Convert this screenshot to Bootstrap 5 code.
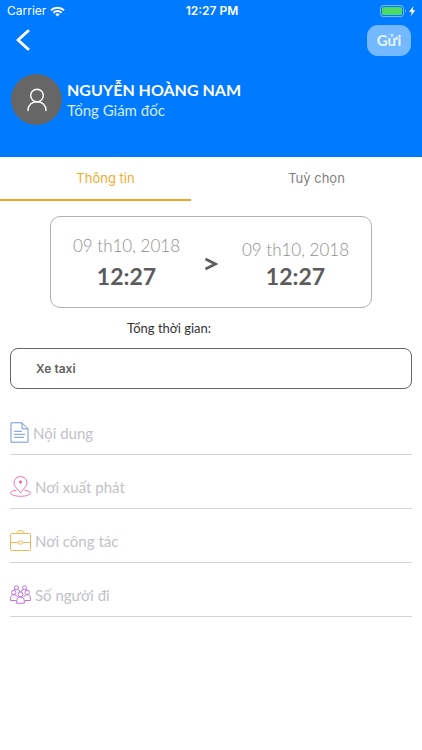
<!DOCTYPE html>
<html lang="vi">
<head>
<meta charset="utf-8">
<meta name="viewport" content="width=device-width, initial-scale=1">
<title>Thông tin</title>
<link href="https://cdn.jsdelivr.net/npm/bootstrap@5.3.0/dist/css/bootstrap.min.css" rel="stylesheet">
<style>
body{font-family:Lato,"Noto Sans",sans-serif;background:#fff;color:#333}
.app-head{background:#007aff;padding-bottom:32px}
.status{font-family:Inter,sans-serif;font-size:12px;line-height:22px;padding:0 5px 0 7px}
.status .clock{font-weight:600}
.toolbar{height:36px;padding:0 11px 0 13px}
.back{line-height:0;padding:0 3px}
.send{width:44px;height:31px;border-radius:11px;background:#74b9ff;color:#e6f4ff;font-size:15px;font-weight:700;line-height:20px}
.send:hover{background:#74b9ff;color:#fff}
.profile{padding:16px 11px 0;gap:5px}
.avatar{width:51px;height:51px;background:#666}
.who{font-size:16px;line-height:20px;font-weight:700}
.post{font-size:15px;line-height:20px;color:#d5eaff}
.tabs .nav-link{font-family:Inter,sans-serif;font-size:13px;line-height:20px;height:44px;padding:11px 0;color:#808080;border-radius:0}
.tabs .nav-link.active{color:#f0ad2d}
.tabline{height:2px;width:45.3%;background:#eba91f;margin-top:-2px}
.period{margin:15px 50px 0;height:92px;border:1px solid #b0b0b0;border-radius:10px;padding:0 22px}
.period svg{margin-top:4px}
.date{font-size:17px;line-height:24px;font-weight:300;color:#8f8f8f}
.time{font-size:23px;line-height:28px;font-weight:700;color:#5c5c5c}
.total{font-size:13px;line-height:20px;margin:10px 0 0 127px}
.request{padding:0 10px}
.vehicle{height:41px;margin-top:10px;border:1px solid #666;border-radius:8px;padding:0 25px;font-family:Inter,sans-serif;font-size:12px;font-weight:600;color:#606060;background:#fff;appearance:none}
.field{height:54px;border-bottom:1px solid #d4d4d4;gap:4px;padding-top:10px}
.field input{font-size:15px;line-height:20px;color:#555;padding:0}
.field input::placeholder{color:#c2c2c7;opacity:1}
.field svg{fill:none;stroke-width:1;flex:none}
</style>
<script src="https://cdn.jsdelivr.net/npm/bootstrap@5.3.0/dist/js/bootstrap.bundle.min.js"></script>
</head>
<body>
<header class="app-head text-white">
  <div class="status row g-0">
    <div class="col d-flex align-items-center gap-1">Carrier
      <svg width="15" height="11" viewBox="0 0 15 11" fill="none" stroke="#fff" stroke-width="2"><path d="M1 4.3a9.3 9.3 0 0 1 13 0M3.4 6.8a5.8 5.8 0 0 1 8.2 0"/><path d="M7.500 10.600 5.300 8.400a3.200 3.200 0 0 1 4.400 0z" fill="#fff" stroke="none"/></svg>
    </div>
    <div class="col-auto clock">12:27 PM</div>
    <div class="col d-flex align-items-center justify-content-end">
      <svg width="37" height="12" viewBox="0 0 37 12"><rect x=".5" y=".5" width="23" height="11" rx="2.5" fill="none" stroke="#77b5ff"/><rect x="2" y="2" width="20" height="8" rx="1" fill="#4cd964"/><path d="M25 4q2 2 0 4z" fill="#77b5ff"/><path d="M33.5 1 29 6.800h2.700L30.800 11 35.400 5.300h-2.700z" fill="#fff"/></svg>
    </div>
  </div>
  <div class="toolbar d-flex align-items-center justify-content-between">
    <button class="btn border-0 back" type="button" aria-label="Quay lại"><svg width="14" height="22" viewBox="0 0 14 22" fill="none" stroke="#fff" stroke-width="3" stroke-linecap="round" stroke-linejoin="round"><path d="M12 2 2 11l10 9"/></svg></button>
    <button class="btn border-0 p-0 send" type="button">Gửi</button>
  </div>
  <div class="profile d-flex align-items-center">
    <div class="avatar rounded-circle d-flex align-items-center justify-content-center">
      <svg width="22" height="24" viewBox="0 0 22 24" fill="none" stroke="#fff" stroke-width="1.4" stroke-linecap="round"><circle cx="11" cy="7.5" r="6.3"/><path d="M2 22.500c0-5.500 4-8.700 9-8.700s9 3.200 9 8.700"/></svg>
    </div>
    <div><div class="who">NGUYỄN HOÀNG NAM</div><div class="post">Tổng Giám đốc</div></div>
  </div>
</header>
<main>
  <nav class="tabs nav nav-justified" aria-label="Mục">
    <a class="nav-link active" href="#info" aria-current="page">Thông tin</a>
    <a class="nav-link" href="#options">Tuỳ chọn</a>
  </nav>
  <div class="tabline"></div>
  <section id="info">
    <div class="period d-flex align-items-center justify-content-between text-center">
      <div><div class="date">09 th10, 2018</div><div class="time pt-1">12:27</div></div>
      <svg width="14" height="14" viewBox="0 0 14 14" fill="none" stroke="#5c5c5c" stroke-width="2.6"><path d="m1.500 2 10 5-10 5"/></svg>
      <div><div class="date pt-1">09 th10, 2018</div><div class="time">12:27</div></div>
    </div>
    <div class="total">Tổng thời gian:</div>
    <form class="request">
      <select class="vehicle w-100 d-block" aria-label="Phương tiện"><option>Xe taxi</option></select>
      <div class="pt-2">
        <div class="field mt-1 d-flex align-items-center">
          <svg width="19" height="21" viewBox="0 0 19 21" stroke="#7295df"><path d="M1 .8h11l6 6v13.400H1zM12 .8v6h6M4 9.300h8M4 12.300h11M4 15.300h10"/></svg>
          <input class="form-control border-0 shadow-none" aria-label="Nội dung" placeholder="Nội dung">
        </div>
        <div class="field d-flex align-items-center">
          <svg width="21" height="21" viewBox="0 0 21 21" stroke="#ef6fa5"><path d="M10.500 17C8 13 4 10.500 4 7a6.500 6.500 0 0 1 13 0c0 3.500-4 6-6.500 10z"/><circle cx="10.500" cy="6" r="1.200" fill="#ef6fa5"/><path d="M6.500 14.300C2.500 14.700.7 15.800.7 17c0 1.800 4 3.300 9.800 3.300s9.800-1.500 9.800-3.300c0-1.200-1.800-2.300-5.800-2.700"/></svg>
          <input class="form-control border-0 shadow-none" aria-label="Nơi xuất phát" placeholder="Nơi xuất phát">
        </div>
        <div class="field d-flex align-items-center">
          <svg width="21" height="21" viewBox="0 0 21 21" stroke="#f0b657"><rect x=".5" y="3.500" width="20" height="17" rx="1"/><path d="M7 3.500c0-1.800.8-2.700 2-2.700h3c1.200 0 2 .9 2 2.700M.5 12.500H8M13 12.500h7.500"/><ellipse cx="10.500" cy="12.500" rx="2.300" ry="1.700"/></svg>
          <input class="form-control border-0 shadow-none" aria-label="Nơi công tác" placeholder="Nơi công tác">
        </div>
        <div class="field d-flex align-items-center">
          <svg width="21" height="19" viewBox="0 0 21 19" stroke="#be70dc"><circle cx="6.500" cy="2.700" r="2"/><circle cx="14.500" cy="2.700" r="2"/><circle cx="3.800" cy="7.500" r="2.200"/><circle cx="17.200" cy="7.500" r="2.200"/><circle cx="10.500" cy="9.500" r="2.500"/><path d="M3.500 5.300Q4 4.700 5.200 4.700M7.800 4.700q1.800.3 2 2.300M13.200 4.700q-1.800.3-2 2.300M15.800 4.700q1.200 0 1.700.6M.6 15.500v-2.300C.6 11 2 9.700 3.800 9.700S7 11 7.300 12M.6 15.500h5.600M20.400 15.500v-2.300c0-2.200-1.400-3.500-3.200-3.500S14 11 13.700 12M20.400 15.500h-5.600M6.700 18.300V16c0-2.500 1.500-4 3.800-4s3.800 1.500 3.800 4v2.300z"/></svg>
          <input class="form-control border-0 shadow-none" aria-label="Số người đi" placeholder="Số người đi">
        </div>
      </div>
    </form>
  </section>
</main>
</body>
</html>
